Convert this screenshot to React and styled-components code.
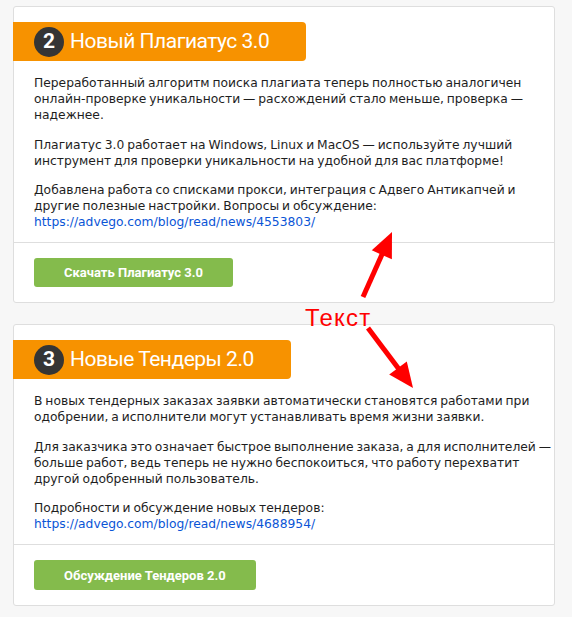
import React from "react";
import styled, { createGlobalStyle } from "styled-components";

const Global = createGlobalStyle`
  html, body { margin: 0; padding: 0; background: #f7f7f7; }
  body { font-family: "DejaVu Sans", Verdana, sans-serif; }
`;

const Page = styled.div`
  position: relative;
  display: flex;
  flex-direction: column;
  gap: 21px;
  padding: 6px 17px 10px 13px;
`;

const Card = styled.section`
  background: #fff;
  border: 1px solid #dedede;
  border-radius: 3px;
`;

const Header = styled.div`
  display: inline-flex;
  align-items: center;
  gap: 6px;
  height: 39px;
  margin: 15px 0 0 -1px;
  padding: 0 37px 0 21px;
  background: #f79200;
  border-radius: 0 4px 4px 0;
`;

const Badge = styled.span`
  display: flex;
  align-items: center;
  justify-content: center;
  width: 30px;
  height: 30px;
  border-radius: 50%;
  background: #353535;
  color: #fff;
  font: bold 21px/1 "Roboto", "DejaVu Sans", sans-serif;
`;

const Title = styled.h2`
  margin: 0;
  color: #fff;
  font: 400 21px/1 "Roboto", "DejaVu Sans", sans-serif;
  letter-spacing: -0.5px;
`;

const Body = styled.div`
  padding: 14px 20px 12px 20px;
`;

const Para = styled.p`
  margin: 0 0 13.5px;
  font-size: 12.3px;
  line-height: 16px;
  word-spacing: -1px;
  color: #1e1e1e;
  white-space: nowrap;
  &:last-child { margin-bottom: 0; }
`;

const Link = styled.a`
  color: #0a55d6;
  text-decoration: none;
`;

const Footer = styled.div`
  border-top: 1px solid #dedede;
  padding: 15px 20px 15px;
`;

const Button = styled.a`
  display: inline-flex;
  align-items: center;
  justify-content: center;
  height: ${(p) => p.$h}px;
  padding: 0 30px;
  background: #84bb4c;
  border-radius: 3px;
  color: #fff;
  font: bold 13px/1 "Roboto", "DejaVu Sans", sans-serif;
  text-decoration: none;
`;

const Overlay = styled.svg`
  position: absolute;
  left: 0;
  top: 0;
  width: 572px;
  height: 617px;
  pointer-events: none;
  overflow: visible;
`;

const Note = styled.span`
  position: absolute;
  left: 305px;
  top: 306px;
  font: 24px/24px "Liberation Sans", Arial, sans-serif;
  letter-spacing: 1.2px;
  color: #ff0000;
`;

function Arrow({ x1, y1, x2, y2 }) {
  const dx = x2 - x1;
  const dy = y2 - y1;
  const len = Math.hypot(dx, dy);
  const ux = dx / len;
  const uy = dy / len;
  const hl = 25;
  const hw = 11;
  const bx = x2 - ux * hl;
  const by = y2 - uy * hl;
  const px = -uy;
  const py = ux;
  return (
    <g fill="#ff0000" stroke="#ff0000">
      <line x1={x1} y1={y1} x2={bx + ux * 2} y2={by + uy * 2} strokeWidth="5" />
      <polygon
        stroke="none"
        points={`${x2},${y2} ${bx + px * hw},${by + py * hw} ${bx - px * hw},${by - py * hw}`}
      />
    </g>
  );
}

export default function App() {
  return (
    <>
      <Global />
      <Page>
        <Card>
          <Header>
            <Badge>2</Badge>
            <Title>Новый Плагиатус 3.0</Title>
          </Header>
          <Body>
            <Para>
              Переработанный алгоритм поиска плагиата теперь полностью аналогичен<br />
              онлайн-проверке уникальности — расхождений стало меньше, проверка —<br />
              надежнее.
            </Para>
            <Para>
              Плагиатус 3.0 работает на Windows, Linux и MacOS — используйте лучший<br />
              инструмент для проверки уникальности на удобной для вас платформе!
            </Para>
            <Para>
              Добавлена работа со списками прокси, интеграция с Адвего Антикапчей и<br />
              другие полезные настройки. Вопросы и обсуждение:<br />
              <Link href="#">https://advego.com/blog/read/news/4553803/</Link>
            </Para>
          </Body>
          <Footer>
            <Button href="#" $h={29}>Скачать Плагиатус 3.0</Button>
          </Footer>
        </Card>
        <Card>
          <Header>
            <Badge>3</Badge>
            <Title>Новые Тендеры 2.0</Title>
          </Header>
          <Body>
            <Para>
              В новых тендерных заказах заявки автоматически становятся работами при<br />
              одобрении, а исполнители могут устанавливать время жизни заявки.
            </Para>
            <Para>
              Для заказчика это означает быстрое выполнение заказа, а для исполнителей —<br />
              больше работ, ведь теперь не нужно беспокоиться, что работу перехватит<br />
              другой одобренный пользователь.
            </Para>
            <Para>
              Подробности и обсуждение новых тендеров:<br />
              <Link href="#">https://advego.com/blog/read/news/4688954/</Link>
            </Para>
          </Body>
          <Footer>
            <Button href="#" $h={30}>Обсуждение Тендеров 2.0</Button>
          </Footer>
        </Card>
        <Overlay viewBox="0 0 572 617">
          <Arrow x1={363} y1={297} x2={392} y2={232} />
          <Arrow x1={368} y1={328} x2={413} y2={388} />
        </Overlay>
        <Note>Текст</Note>
      </Page>
    </>
  );
}
